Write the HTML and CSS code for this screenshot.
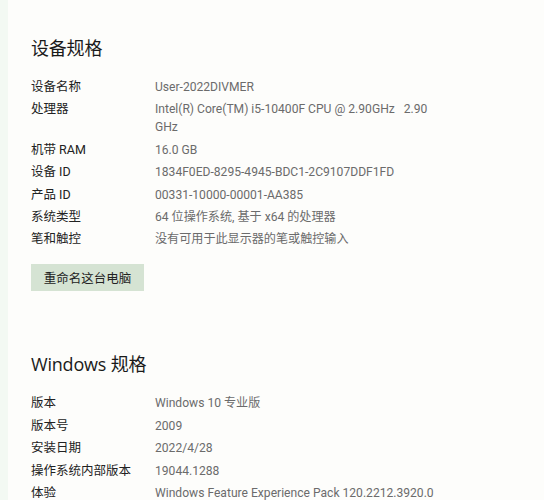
FILE: index.html
```html
<!DOCTYPE html>
<html lang="zh-CN">
<head>
<meta charset="utf-8">
<title>关于</title>
<link rel="stylesheet" href="styles.css">
</head>
<body>
<div class="strip"></div>
<main class="main">
  <section class="section first">
    <h2 class="title">设备规格</h2>
    <dl class="specs">
      <div class="row"><dt>设备名称</dt><dd>User-2022DIVMER</dd></div>
      <div class="row"><dt>处理器</dt><dd>Intel(R) Core(TM) i5-10400F CPU @ 2.90GHz&nbsp;&nbsp;&nbsp;2.90 GHz</dd></div>
      <div class="row"><dt>机带 RAM</dt><dd>16.0 GB</dd></div>
      <div class="row"><dt>设备 ID</dt><dd>1834F0ED-8295-4945-BDC1-2C9107DDF1FD</dd></div>
      <div class="row"><dt>产品 ID</dt><dd>00331-10000-00001-AA385</dd></div>
      <div class="row"><dt>系统类型</dt><dd>64 位操作系统, 基于 x64 的处理器</dd></div>
      <div class="row"><dt>笔和触控</dt><dd>没有可用于此显示器的笔或触控输入</dd></div>
    </dl>
    <button class="btn" type="button">重命名这台电脑</button>
  </section>
  <section class="section second">
    <h2 class="title">Windows 规格</h2>
    <dl class="specs">
      <div class="row"><dt>版本</dt><dd>Windows 10 专业版</dd></div>
      <div class="row"><dt>版本号</dt><dd>2009</dd></div>
      <div class="row"><dt>安装日期</dt><dd>2022/4/28</dd></div>
      <div class="row"><dt>操作系统内部版本</dt><dd>19044.1288</dd></div>
      <div class="row"><dt>体验</dt><dd class="nowrap">Windows Feature Experience Pack 120.2212.3920.0</dd></div>
    </dl>
  </section>
</main>
</body>
</html>
```
FILE: styles.css
```css
html, body {
  margin: 0;
  padding: 0;
  height: 100%;
  overflow: hidden;
}
body {
  display: flex;
  background: #fdfdfb;
  font-family: "Roboto", "Noto Sans CJK SC", sans-serif;
  color: #222;
}
.strip {
  width: 8px;
  flex: none;
  background: #f3f9f3;
}
.main {
  flex: 1;
  padding-left: 23px;
}
.section.first {
  padding-top: 36px;
}
.section.second {
  padding-top: 61px;
}
.title {
  margin: 0 0 18px;
  font-family: "Open Sans", "Noto Sans CJK SC", sans-serif;
  font-size: 18px;
  line-height: 24px;
  font-weight: 400;
  letter-spacing: -0.2px;
  color: #1a1a1a;
}
.specs {
  margin: 0;
  display: flex;
  flex-direction: column;
  gap: 4.4px;
}
.row {
  display: flex;
  font-size: 12.5px;
  line-height: 18px;
}
.row dt {
  width: 124px;
  flex: none;
  color: #222;
}
.row dd {
  margin: 0;
  width: 286px;
  font-size: 12.1px;
  color: #6b6b6b;
}
.row dd.nowrap {
  white-space: nowrap;
}
.btn {
  margin-top: 16px;
  width: 113px;
  height: 27px;
  border: none;
  padding: 0;
  background: #d5e3d3;
  font-family: "Noto Sans CJK SC", sans-serif;
  font-size: 12.5px;
  color: #222;
}
```
